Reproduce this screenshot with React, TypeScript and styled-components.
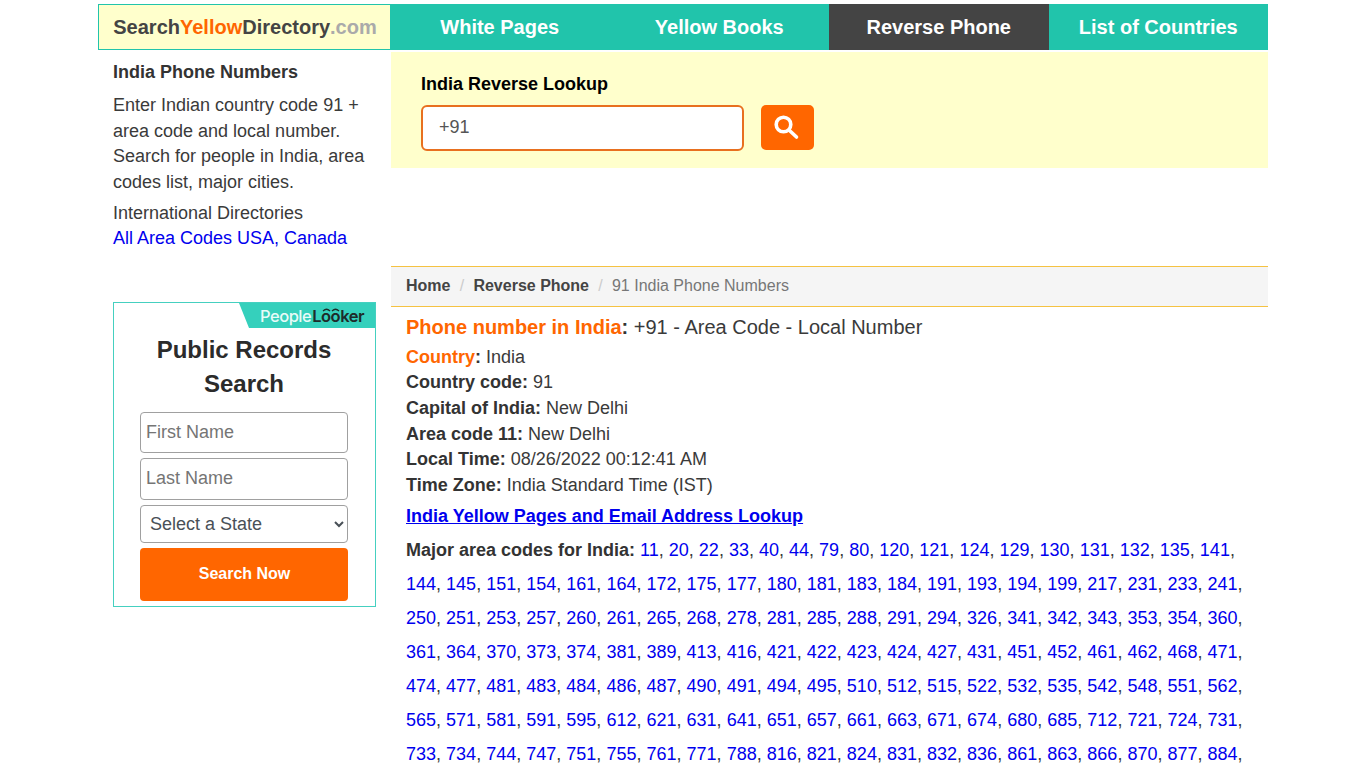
import React from "react";
import styled, { createGlobalStyle } from "styled-components";

const Global = createGlobalStyle`
  * { box-sizing: border-box; }
  html, body { margin: 0; padding: 0; background: #fff; overflow: hidden; height: 768px; }
  body { font-family: "Liberation Sans", Arial, sans-serif; font-size: 18px; line-height: 25.7px; color: #3a3a3a; }
`;

const Page = styled.div`
  width: 1170px;
  margin: 0 auto;
  padding-top: 4px;
`;
const Header = styled.header`
  display: flex;
  height: 46px;
`;
const Logo = styled.a`
  width: 292px;
  flex: none;
  background: #ffffcc;
  border: 1px solid #21c4ab;
  border-right: 0;
  display: flex;
  align-items: center;
  justify-content: center;
  padding: 1px 0 0 1px;
  font-size: 20px;
  font-weight: 700;
  color: #444;
`;
const LogoPart = styled.span<{ $c: string }>`
  color: ${(p) => p.$c};
`;
const Nav = styled.nav`
  flex: 1;
  display: grid;
  grid-template-columns: repeat(4, 1fr);
`;
const NavItem = styled.a<{ $active?: boolean }>`
  display: flex;
  align-items: center;
  justify-content: center;
  padding-top: 1px;
  background: ${(p) => (p.$active ? "#444444" : "#21c4ab")};
  color: #fff;
  font-size: 20px;
  font-weight: 700;
`;
const Columns = styled.div`
  display: flex;
  align-items: flex-start;
`;
const Side = styled.aside`
  width: 293px;
  flex: none;
  padding: 10px 15px 0;
`;
const SideTitle = styled.h2`
  margin: 0 0 7.3px;
  font-size: 18px;
  line-height: 25.7px;
  font-weight: 700;
  color: #333;
`;
const SideText = styled.p`
  margin: 0 0 4.7px;
`;
const BlueLink = styled.a`
  color: #0000ee;
`;
const Main = styled.main`
  flex: 1;
  min-width: 0;
`;
const SearchBand = styled.div`
  height: 116px;
  margin-top: 2px;
  background: #ffffcc;
  padding: 20px 30px 0;
`;
const BandLabel = styled.div`
  font-size: 18px;
  font-weight: 700;
  color: #000;
  line-height: 25.7px;
  margin-bottom: 7px;
`;
const BandRow = styled.div`
  display: flex;
  gap: 17px;
`;
const PhoneInput = styled.div`
  width: 323px;
  height: 46px;
  background: #fff;
  border: 2px solid #e8701f;
  border-radius: 6px;
  padding-left: 16px;
  display: flex;
  align-items: center;
  color: #555;
`;
const SearchBtn = styled.button`
  width: 53px;
  height: 45px;
  background: #ff6600;
  border: 0;
  border-radius: 5px;
  padding: 0;
  display: flex;
  align-items: center;
  justify-content: center;
`;
const Crumbs = styled.div`
  margin-top: 98px;
  height: 41px;
  background: #f5f5f5;
  border-top: 1px solid #f5c242;
  border-bottom: 1px solid #f5c242;
  padding: 0 15px 2px;
  display: flex;
  align-items: center;
  font-size: 16px;
  color: #777;
`;
const CrumbLink = styled.a`
  font-weight: 700;
  color: #444;
`;
const CrumbSep = styled.span`
  color: #ccc;
  padding: 0 9.25px;
`;
const Content = styled.div`
  padding: 6px 15px 0;
`;
const Heading = styled.h1`
  margin: 0 0 3.55px;
  font-size: 20px;
  line-height: 28px;
  font-weight: 400;
`;
const Orange = styled.span`
  color: #ff6600;
`;
const Strong = styled.b`
  color: #333;
`;
const Facts = styled.div`
  margin-bottom: 5.15px;
`;
const Lookup = styled.a`
  display: block;
  font-weight: 700;
  color: #0000ee;
  text-decoration: underline;
  margin-bottom: 3.5px;
`;
const Codes = styled.p`
  margin: 0;
  line-height: 34px;
`;
const Widget = styled.div`
  margin-top: 50px;
  width: 263px;
  height: 305px;
  border: 1px solid #45d0c0;
  position: relative;
  padding: 30px 27px 0 26px;
`;
const Badge = styled.div`
  position: absolute;
  top: 0;
  right: 0;
  width: 136px;
  height: 25px;
  background: #35d0bc;
  clip-path: polygon(0 0, 100% 0, 100% 100%, 10px 100%);
  display: flex;
  align-items: center;
  justify-content: flex-end;
  padding: 2px 11px 0 0;
  font-family: Inter, sans-serif;
  font-size: 16.5px;
  font-weight: 500;
  letter-spacing: -0.5px;
  color: #e9fbf8;
`;
const BadgeDark = styled.span`
  color: #1d2b2a;
  font-weight: 600;
  margin-left: 1px;
`;
const BadgeEyes = styled.span`
  position: relative;
`;
const EyeBrows = styled.svg`
  position: absolute;
  top: 1px;
  left: 1px;
`;
const WidgetTitle = styled.h3`
  margin: 0 0 11px;
  text-align: center;
  font-size: 24px;
  line-height: 34px;
  font-weight: 700;
  color: #2b2b2b;
`;
const Field = styled.input<{ $h: number }>`
  display: block;
  width: 100%;
  height: ${(p) => p.$h}px;
  border: 1px solid #a0a0a0;
  border-radius: 4px;
  padding: 0 5px;
  margin-bottom: 5px;
  font-family: inherit;
  font-size: 18px;
  background: #fff;
  &::placeholder { color: #757575; opacity: 1; }
`;
const StateSelect = styled.select`
  display: block;
  width: 100%;
  height: 38px;
  border: 1px solid #a0a0a0;
  border-radius: 4px;
  padding: 0 5px;
  margin-bottom: 5px;
  font-family: inherit;
  font-size: 18px;
  color: #495057;
  background: #fff;
`;
const SubmitBtn = styled.button`
  display: block;
  width: 100%;
  height: 53px;
  border: 0;
  border-radius: 4px;
  background: #ff6600;
  color: #fff;
  padding: 0 0 0 1px;
  font-family: inherit;
  font-size: 16px;
  font-weight: 700;
`;

const codes = `11 20 22 33 40 44 79 80 120 121 124 129 130 131 132 135 141 144 145 151 154 161 164 172 175 177 180 181 183 184 191 193 194 199 217 231 233 241 250 251 253 257 260 261 265 268 278 281 285 288 291 294 326 341 342 343 353 354 360 361 364 370 373 374 381 389 413 416 421 422 423 424 427 431 451 452 461 462 468 471 474 477 481 483 484 486 487 490 491 494 495 510 512 515 522 532 535 542 548 551 562 565 571 581 591 595 612 621 631 641 651 657 661 663 671 674 680 685 712 721 724 731 733 734 744 747 751 755 761 771 788 816 821 824 831 832 836 861 863 866 870 877 884`.split(" ");

const facts: [string, string][] = [
  ["Country code:", "91"],
  ["Capital of India:", "New Delhi"],
  ["Area code 11:", "New Delhi"],
  ["Local Time:", "08/26/2022 00:12:41 AM"],
  ["Time Zone:", "India Standard Time (IST)"],
];

export default function App() {
  return (
    <Page>
      <Global />
      <Header>
        <Logo>
          Search<LogoPart $c="#ff6600">Yellow</LogoPart>Directory<LogoPart $c="#aaaaaa">.com</LogoPart>
        </Logo>
        <Nav>
          <NavItem>White Pages</NavItem>
          <NavItem>Yellow Books</NavItem>
          <NavItem $active>Reverse Phone</NavItem>
          <NavItem>List of Countries</NavItem>
        </Nav>
      </Header>
      <Columns>
        <Side>
          <SideTitle>India Phone Numbers</SideTitle>
          <SideText>Enter Indian country code 91 + area code and local number. Search for people in India, area codes list, major cities.</SideText>
          <div>International Directories</div>
          <BlueLink>All Area Codes USA, Canada</BlueLink>
          <Widget>
            <Badge>
              People
              <BadgeDark>
                L
                <BadgeEyes>
                  oo
                  <EyeBrows width="18" height="5" viewBox="0 0 18 5" fill="none" stroke="#1d2b2a" strokeWidth="1.2">
                    <path d="M1 4q3.5-3.5 7 0M10 4q3.5-3.5 7 0" />
                  </EyeBrows>
                </BadgeEyes>
                ker
              </BadgeDark>
            </Badge>
            <WidgetTitle>Public Records Search</WidgetTitle>
            <Field $h={41} placeholder="First Name" />
            <Field $h={42} placeholder="Last Name" />
            <StateSelect defaultValue="">
              <option value="">Select a State</option>
            </StateSelect>
            <SubmitBtn>Search Now</SubmitBtn>
          </Widget>
        </Side>
        <Main>
          <SearchBand>
            <BandLabel>India Reverse Lookup</BandLabel>
            <BandRow>
              <PhoneInput>+91</PhoneInput>
              <SearchBtn aria-label="Search">
                <svg width="53" height="45" viewBox="0 0 53 45" fill="none" stroke="#fff">
                  <circle cx="22.5" cy="19.5" r="7.3" strokeWidth="3.6" />
                  <path d="M28.5 25.5l7 6.5" strokeWidth="3.6" strokeLinecap="round" />
                </svg>
              </SearchBtn>
            </BandRow>
          </SearchBand>
          <Crumbs>
            <CrumbLink>Home</CrumbLink>
            <CrumbSep>/</CrumbSep>
            <CrumbLink>Reverse Phone</CrumbLink>
            <CrumbSep>/</CrumbSep>
            91 India Phone Numbers
          </Crumbs>
          <Content>
            <Heading>
              <Strong><Orange>Phone number in India</Orange>:</Strong> +91 - Area Code - Local Number
            </Heading>
            <Facts>
              <div><Strong><Orange>Country</Orange>:</Strong> India</div>
              {facts.map(([k, v]) => (
                <div key={k}><Strong>{k}</Strong> {v}</div>
              ))}
            </Facts>
            <Lookup>India Yellow Pages and Email Address Lookup</Lookup>
            <Codes>
              <Strong>Major area codes for India:</Strong>{" "}
              {codes.map((c) => (
                <React.Fragment key={c}>
                  <BlueLink>{c}</BlueLink>,{" "}
                </React.Fragment>
              ))}
            </Codes>
          </Content>
        </Main>
      </Columns>
    </Page>
  );
}
